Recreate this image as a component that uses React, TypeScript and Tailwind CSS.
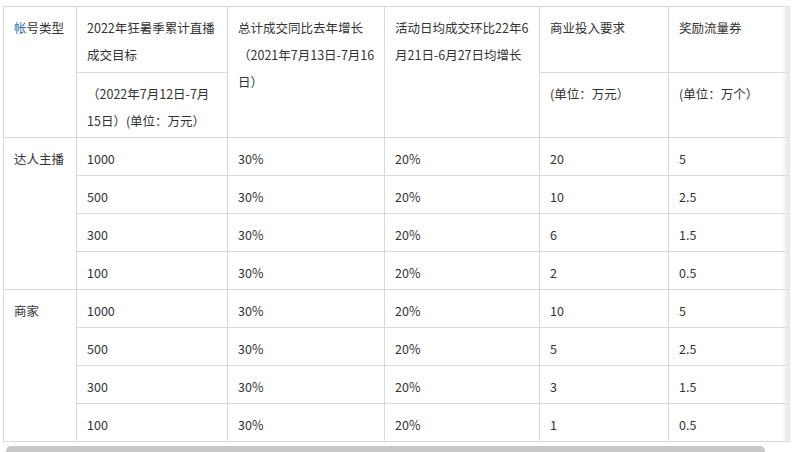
import React from "react";

const cell =
  "border border-[#d9d9d9] align-top pl-[10px] pr-[6px] pt-[7px] pb-[3px] leading-[27px] whitespace-nowrap text-left font-normal";

const groups: { name: string; rows: string[][] }[] = [
  {
    name: "达人主播",
    rows: [
      ["1000", "30%", "20%", "20", "5"],
      ["500", "30%", "20%", "10", "2.5"],
      ["300", "30%", "20%", "6", "1.5"],
      ["100", "30%", "20%", "2", "0.5"],
    ],
  },
  {
    name: "商家",
    rows: [
      ["1000", "30%", "20%", "10", "5"],
      ["500", "30%", "20%", "5", "2.5"],
      ["300", "30%", "20%", "3", "1.5"],
      ["100", "30%", "20%", "1", "0.5"],
    ],
  },
];

export default function App() {
  return (
    <div
      className="bg-white w-[795px] h-[452px] overflow-hidden text-[#333] text-[12.5px] pt-[6px] pl-[3px]"
      style={{ fontFamily: '"Noto Sans CJK SC", "Noto Sans", sans-serif' }}
    >
      <div className="relative w-[787px] overflow-hidden">
        <table className="table-fixed border-collapse w-[830px]">
          <colgroup>
            <col className="w-[73px]" />
            <col className="w-[151px]" />
            <col className="w-[157px]" />
            <col className="w-[155px]" />
            <col className="w-[129px]" />
            <col className="w-[165px]" />
          </colgroup>
          <thead>
            <tr className="h-[66px]">
              <th rowSpan={2} className={cell}>
                <span className="text-[#2f6fb5]">帐</span>号类型
              </th>
              <th className={cell}>
                2022年狂暑季累计直播
                <br />
                成交目标
              </th>
              <th rowSpan={2} className={cell}>
                总计成交同比去年增长
                <br />
                （2021年7月13日-7月16
                <br />
                日）
              </th>
              <th rowSpan={2} className={cell}>
                活动日均成交环比22年6
                <br />
                月21日-6月27日均增长
              </th>
              <th className={cell}>商业投入要求</th>
              <th className={cell}>奖励流量券</th>
            </tr>
            <tr className="h-[65px]">
              <th className={cell}>
                （2022年7月12日-7月
                <br />
                15日）(单位：万元）
              </th>
              <th className={cell}>(单位：万元）</th>
              <th className={cell}>(单位：万个）</th>
            </tr>
          </thead>
          <tbody>
            {groups.map((g) =>
              g.rows.map((r, i) => (
                <tr key={g.name + i} className="h-[38px]">
                  {i === 0 && (
                    <td rowSpan={4} className={cell}>
                      {g.name}
                    </td>
                  )}
                  {r.map((v, j) => (
                    <td key={j} className={cell}>
                      {v}
                    </td>
                  ))}
                </tr>
              ))
            )}
          </tbody>
        </table>
        <div className="pointer-events-none absolute top-0 right-0 bottom-0 w-[9px] bg-gradient-to-r from-white/0 to-[#e4e4e4]" />
      </div>
      <div className="pt-[4px] pl-[3px]">
        <div className="w-[759px] h-[10px] rounded-full bg-[#c8c8c8]" />
      </div>
    </div>
  );
}
